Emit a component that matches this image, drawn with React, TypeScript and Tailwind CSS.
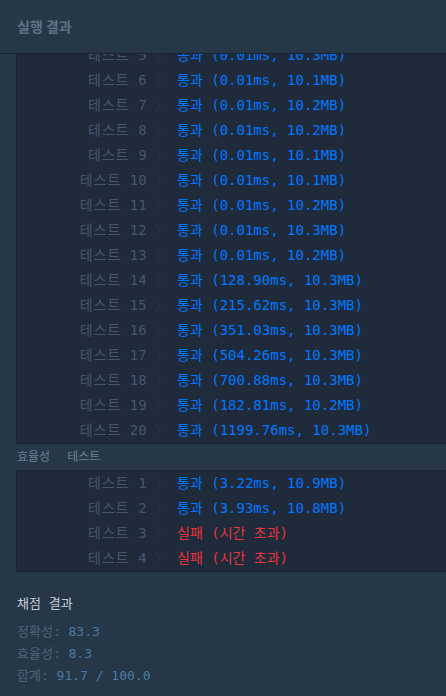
import React from "react";

type Row = { n: number; ok: boolean; text: string };

const accuracy: Row[] = [
  { n: 5, ok: true, text: "(0.01ms, 10.3MB)" },
  { n: 6, ok: true, text: "(0.01ms, 10.1MB)" },
  { n: 7, ok: true, text: "(0.01ms, 10.2MB)" },
  { n: 8, ok: true, text: "(0.01ms, 10.2MB)" },
  { n: 9, ok: true, text: "(0.01ms, 10.1MB)" },
  { n: 10, ok: true, text: "(0.01ms, 10.1MB)" },
  { n: 11, ok: true, text: "(0.01ms, 10.2MB)" },
  { n: 12, ok: true, text: "(0.01ms, 10.3MB)" },
  { n: 13, ok: true, text: "(0.01ms, 10.2MB)" },
  { n: 14, ok: true, text: "(128.90ms, 10.3MB)" },
  { n: 15, ok: true, text: "(215.62ms, 10.3MB)" },
  { n: 16, ok: true, text: "(351.03ms, 10.3MB)" },
  { n: 17, ok: true, text: "(504.26ms, 10.3MB)" },
  { n: 18, ok: true, text: "(700.88ms, 10.3MB)" },
  { n: 19, ok: true, text: "(182.81ms, 10.2MB)" },
  { n: 20, ok: true, text: "(1199.76ms, 10.3MB)" },
];

const efficiency: Row[] = [
  { n: 1, ok: true, text: "(3.22ms, 10.9MB)" },
  { n: 2, ok: true, text: "(3.93ms, 10.8MB)" },
  { n: 3, ok: false, text: "(시간 초과)" },
  { n: 4, ok: false, text: "(시간 초과)" },
];

const mono = "font-['DejaVu_Sans_Mono','Noto_Sans_CJK_KR',monospace]";

function ResultRow({ row }: { row: Row }) {
  return (
    <div className="flex h-[25px] items-center text-[14px] whitespace-pre">
      <div className="w-[152px] text-right text-[#44576c]">
        <span className="tracking-[1px]">테스트</span> {row.n} <span className="font-light text-[#2c3a4a]">〉</span>
      </div>
      <div className={`pl-[8px] ${row.ok ? "text-[#0078ff]" : "text-[#e8343a]"}`}>
        {row.ok ? "통과" : "실패"} {row.text}
      </div>
    </div>
  );
}

export default function App() {
  return (
    <div className={`flex h-[696px] w-[446px] flex-col overflow-hidden bg-[#263747] ${mono}`}>
      <div className="relative z-10 flex h-[54px] shrink-0 items-center border-b border-[#172334] bg-[#263747] px-[17px]">
        <span className="font-['Noto_Sans_CJK_KR',sans-serif] text-[14px] font-bold text-[#5d7286]">실행 결과</span>
      </div>

      <div className="overflow-hidden">
        <div className="-mt-[11px] pl-[16px]">
          <div className="border-b border-l border-[#172334] bg-[#1f2a3b]">
            {accuracy.map((r) => (
              <ResultRow key={r.n} row={r} />
            ))}
          </div>

          <div className="-ml-[16px] flex h-[26px] items-center gap-[17px] pl-[17px] text-[12px] text-[#6a8295]">
            <span>효율성</span>
            <span>테스트</span>
          </div>

          <div className="border-y border-l border-[#172334] bg-[#1f2a3b]">
            {efficiency.map((r) => (
              <ResultRow key={r.n} row={r} />
            ))}
          </div>

          <div className="-ml-[16px] pl-[17px] pt-[22px]">
            <div className="text-[13px] leading-[20px] text-[#c5ccd4]">채점 결과</div>
            <div className="mt-[7px] flex flex-col text-[13px] leading-[22px]">
              <div>
                <span className="text-[#4d6478]">정확성: </span>
                <span className="text-[#4a7ba6]">83.3</span>
              </div>
              <div>
                <span className="text-[#4d6478]">효율성: </span>
                <span className="text-[#4a7ba6]">8.3</span>
              </div>
              <div>
                <span className="text-[#4d6478]">합계: </span>
                <span className="text-[#4a7ba6]">91.7 / 100.0</span>
              </div>
            </div>
          </div>
        </div>
      </div>
    </div>
  );
}
